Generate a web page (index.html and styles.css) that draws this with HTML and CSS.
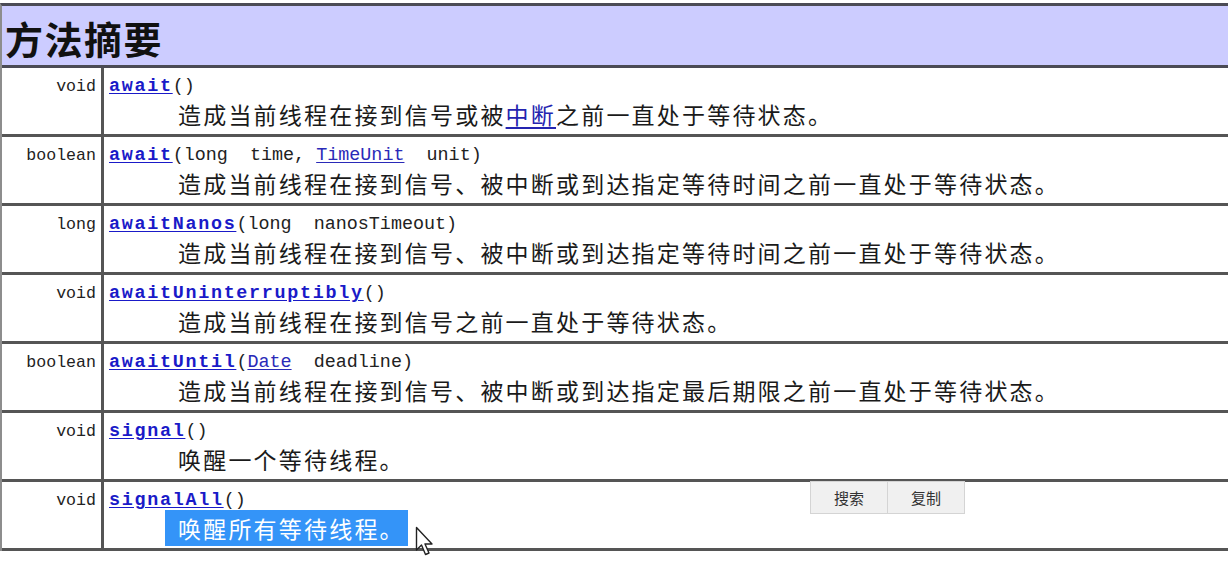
FILE: index.html
```html
<!DOCTYPE html>
<html lang="zh">
<head>
<meta charset="utf-8">
<title>方法摘要</title>
<link rel="stylesheet" href="styles.css">
</head>
<body>
<div class="summary">
  <div class="head"><h2 class="title">方法摘要</h2></div>

  <div class="row">
    <div class="type">void</div>
    <div class="method">
      <div class="sig"><a class="name" href="#">await</a>()</div>
      <div class="desc">造成当前线程在接到信号或被<a class="ilink" href="#">中断</a>之前一直处于等待状态。</div>
    </div>
  </div>

  <div class="row">
    <div class="type">boolean</div>
    <div class="method">
      <div class="sig"><a class="name" href="#">await</a>(long  time, <a class="tlink" href="#">TimeUnit</a>  unit)</div>
      <div class="desc">造成当前线程在接到信号、被中断或到达指定等待时间之前一直处于等待状态。</div>
    </div>
  </div>

  <div class="row">
    <div class="type">long</div>
    <div class="method">
      <div class="sig"><a class="name" href="#">awaitNanos</a>(long  nanosTimeout)</div>
      <div class="desc">造成当前线程在接到信号、被中断或到达指定等待时间之前一直处于等待状态。</div>
    </div>
  </div>

  <div class="row">
    <div class="type">void</div>
    <div class="method">
      <div class="sig"><a class="name" href="#">awaitUninterruptibly</a>()</div>
      <div class="desc">造成当前线程在接到信号之前一直处于等待状态。</div>
    </div>
  </div>

  <div class="row">
    <div class="type">boolean</div>
    <div class="method">
      <div class="sig"><a class="name" href="#">awaitUntil</a>(<a class="tlink" href="#">Date</a>  deadline)</div>
      <div class="desc">造成当前线程在接到信号、被中断或到达指定最后期限之前一直处于等待状态。</div>
    </div>
  </div>

  <div class="row">
    <div class="type">void</div>
    <div class="method">
      <div class="sig"><a class="name" href="#">signal</a>()</div>
      <div class="desc">唤醒一个等待线程。</div>
    </div>
  </div>

  <div class="row">
    <div class="type">void</div>
    <div class="method">
      <div class="sig"><a class="name" href="#">signalAll</a>()</div>
      <div class="desc"><span class="selected">唤醒所有等待线程。</span></div>
    </div>
  </div>
</div>

<div class="popup">
  <div class="pbtn">搜索</div>
  <div class="pbtn">复制</div>
</div>

<svg class="cursor" width="22" height="32" viewBox="0 0 22 32">
  <path d="M1.5 1.5 L1.5 24 L6.5 19 L10.5 28.5 L14 27 L10 18 L17 18 Z" fill="#fff" stroke="#222" stroke-width="1.4" stroke-linejoin="round"/>
</svg>
</body>
</html>
```

FILE: styles.css
```css
html, body {
  margin: 0;
  padding: 0;
  background: #fff;
  overflow: hidden;
}
body {
  width: 1228px;
  height: 568px;
  position: relative;
  font-family: "Noto Sans CJK SC", "Noto Sans", sans-serif;
}
.summary {
  margin-top: 3px;
  width: 1240px;
  border-top: 3px solid #4b4b55;
  border-left: 2px solid #8d8d8d;
}
.head {
  height: 62px;
  background: #ccccff;
  border-bottom: 3px solid #4b4b55;
  display: flex;
  align-items: center;
  padding-left: 3px;
  padding-top: 5px;
  box-sizing: border-box;
}
.title {
  margin: 0;
  font-size: 38px;
  font-weight: 700;
  letter-spacing: 1.5px;
  color: #111;
  line-height: 1;
}
.row {
  display: flex;
  height: 69px;
  box-sizing: border-box;
  border-bottom: 3px solid #555;
}
.type {
  width: 94px;
  padding-right: 5px;
  flex: none;
  border-right: 3px solid #555;
  box-sizing: content-box;
  text-align: right;
  font-family: "Liberation Mono", "DejaVu Sans Mono", monospace;
  font-size: 16.6px;
  line-height: 22px;
  padding-top: 8px;
  color: #222;
}
.method {
  flex: 1;
  padding-left: 5px;
  padding-top: 8px;
}
.sig {
  font-family: "Liberation Mono", "DejaVu Sans Mono", monospace;
  font-size: 18.4px;
  line-height: 22px;
  white-space: pre;
  color: #222;
}
.name {
  font-weight: 700;
  color: #1a1ac8;
  letter-spacing: 1.7px;
  text-decoration: underline;
  text-underline-offset: 2px;
}
.tlink {
  color: #2a2ab8;
  text-decoration: underline;
  text-underline-offset: 2px;
}
.desc {
  margin-top: 1px;
  padding-left: 69px;
  font-size: 23px;
  letter-spacing: 2.2px;
  line-height: 30px;
  color: #1a1a1a;
  white-space: nowrap;
}
.ilink {
  color: #2424b0;
  text-decoration: underline;
  text-underline-offset: 3px;
}
.selected {
  background: #3494f8;
  color: #fff;
  padding: 1px 3px 1px 13px;
  margin-left: -13px;
}
.popup {
  position: absolute;
  left: 810px;
  top: 481px;
  display: flex;
  border: 1px solid #d4d4d4;
  background: #f0f0f0;
}
.pbtn {
  width: 76px;
  height: 31px;
  display: flex;
  align-items: center;
  justify-content: center;
  font-size: 15px;
  color: #333;
}
.pbtn + .pbtn {
  border-left: 1px solid #d4d4d4;
}
.cursor {
  position: absolute;
  left: 415px;
  top: 526px;
}
```
